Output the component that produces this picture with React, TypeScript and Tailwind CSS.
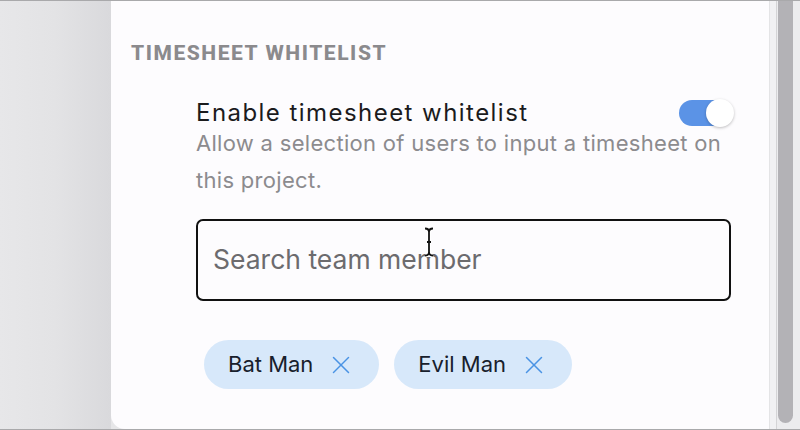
import React, { useState } from 'react';
import { X } from 'lucide-react';

const members = ['Bat Man', 'Evil Man'];

export default function App() {
  const [enabled, setEnabled] = useState(true);
  const [chips, setChips] = useState(members);

  return (
    <div
      className="w-[800px] h-[430px] flex overflow-hidden border-t border-b border-[#a9a9ab] bg-[#e6e6e8]"
      style={{ fontFamily: 'Inter, "Noto Sans", sans-serif' }}
    >
      <div className="w-[111px] shrink-0 bg-gradient-to-r from-[#e7e7e9] via-[#e3e3e5] to-[#d9d9dc]" />

      <div className="relative flex-1 bg-[#fdfcfe] rounded-bl-[14px] border-r border-[#e4e4e6] pt-[38px] pl-5">
        <h2
          className="text-[21px] leading-7 font-extrabold tracking-[1.55px] text-[#8b8a8d] uppercase"
          style={{ fontFamily: 'Roboto, "Liberation Sans", sans-serif' }}
        >
          Timesheet whitelist
        </h2>

        <div className="ml-[65px] w-[535px] mt-[31px]">
          <div className="flex items-center justify-between h-[30px]">
            <p className="text-[24px] leading-[30px] tracking-[1.45px] text-[#1b1b1d]">Enable timesheet whitelist</p>
            <button
              onClick={() => setEnabled(!enabled)}
              className={`relative w-[54px] h-[26px] rounded-full mr-[-2px] ${enabled ? 'bg-[#5b93e6]' : 'bg-gray-300'}`}
            >
              <span
                className={`absolute top-[-1px] w-[28px] h-[28px] rounded-full bg-white shadow-[0_1px_3px_rgba(0,0,0,0.25)] ${enabled ? 'right-[-1px]' : 'left-[-1px]'}`}
              />
            </button>
          </div>
          <p className="text-[22px] leading-[37px] tracking-[0.3px] text-[#8c8b8e] mt-[-3px]">
            Allow a selection of users to input a timesheet on this project.
          </p>

          <div className="relative mt-[20px] h-[82px] border-2 border-[#111] rounded-[7px] flex items-center px-[15px]">
            <input
              placeholder="Search team member"
              className="w-full bg-transparent outline-none text-[26.5px] placeholder:text-[#6c6b6e] text-[#1b1b1d]"
            />
            <svg className="absolute left-[226px] top-[6px]" width="10" height="30" viewBox="0 0 10 30">
              <path d="M1 1.5 Q5 1.5 5 5 L5 25 Q5 28.5 1 28.5 M9 1.5 Q5 1.5 5 5 M5 25 Q5 28.5 9 28.5" fill="none" stroke="#fff" strokeWidth="3.5" />
              <path d="M1 1.5 Q5 1.5 5 5 L5 25 Q5 28.5 1 28.5 M9 1.5 Q5 1.5 5 5 M5 25 Q5 28.5 9 28.5 M3 15 L7 15" fill="none" stroke="#111" strokeWidth="1.8" />
            </svg>
          </div>

          <div className="flex gap-[15px] mt-[39px] ml-2">
            {chips.map((c) => (
              <div key={c} className="flex items-center h-[49px] rounded-full bg-[#d7e8fa] pl-[24px] pr-[23px]">
                <span className="text-[22px] text-[#18202c]">{c}</span>
                <button onClick={() => setChips(chips.filter((x) => x !== c))} className="ml-[13px] text-[#4a93e4]">
                  <X size={30} strokeWidth={1.2} />
                </button>
              </div>
            ))}
          </div>
        </div>
      </div>

      <div className="w-[6px] shrink-0 bg-[#f1f1f3]" />
      <div className="w-[24px] shrink-0 bg-[#ececee] border-l border-[#d4d4d6] pl-[1px] pr-[7px]">
        <div className="h-[422px] bg-[#b3b2b6] rounded-b-full" />
      </div>
    </div>
  );
}
